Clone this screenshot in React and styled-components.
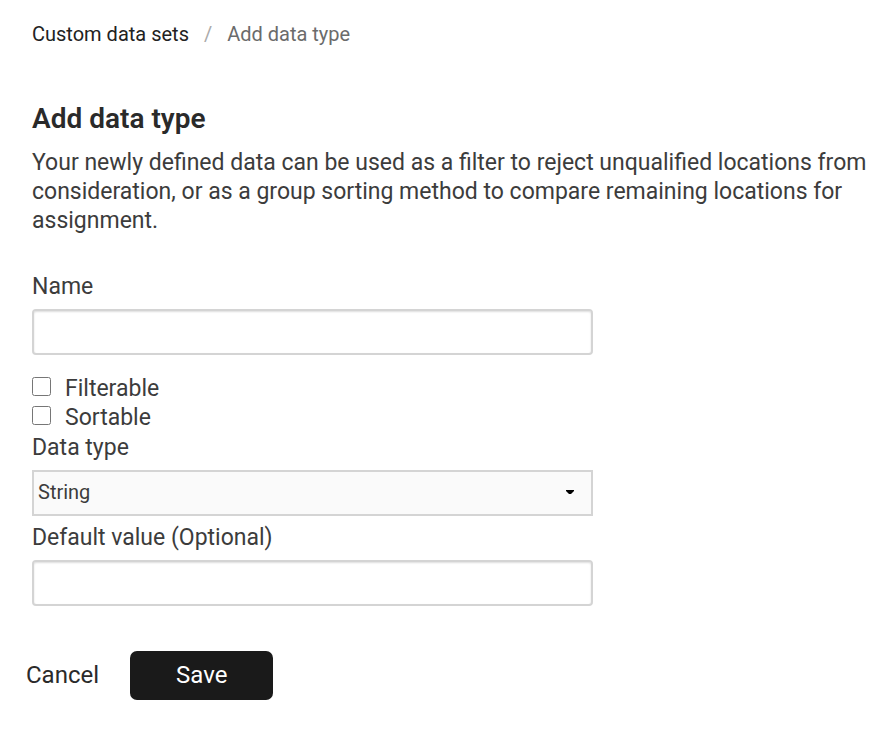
import React, { useState } from "react";
import styled, { createGlobalStyle } from "styled-components";

function App() {
  const [name, setName] = useState("");
  const [filterable, setFilterable] = useState(false);
  const [sortable, setSortable] = useState(false);
  const [type, setType] = useState("string");
  const [defaultValue, setDefaultValue] = useState("");

  return (
    <Page>
      <GlobalStyle />
      <Breadcrumb aria-label="Breadcrumb">
        <BreadcrumbLink href="#data-sets">Custom data sets</BreadcrumbLink>
        <Divider>/</Divider>
        <span>Add data type</span>
      </Breadcrumb>
      <Title>Add data type</Title>
      <Description>
        Your newly defined data can be used as a filter to reject unqualified
        locations from consideration, or as a group sorting method to compare
        remaining locations for assignment.
      </Description>
      <Form onSubmit={(e) => e.preventDefault()}>
        <Label htmlFor="name">Name</Label>
        <TextInput
          id="name"
          value={name}
          onChange={(e) => setName(e.target.value)}
        />
        <CheckList>
          <CheckLabel>
            <Checkbox
              type="checkbox"
              checked={filterable}
              onChange={(e) => setFilterable(e.target.checked)}
            />
            Filterable
          </CheckLabel>
          <CheckLabel>
            <Checkbox
              type="checkbox"
              checked={sortable}
              onChange={(e) => setSortable(e.target.checked)}
            />
            Sortable
          </CheckLabel>
        </CheckList>
        <Label htmlFor="type">Data type</Label>
        <SelectBox>
          <Select
            id="type"
            value={type}
            onChange={(e) => setType(e.target.value)}
          >
            <option value="string">String</option>
            <option value="number">Number</option>
            <option value="boolean">Boolean</option>
          </Select>
          <Arrow viewBox="0 0 8 4" aria-hidden="true">
            <path d="M0 0h8v1L5 4H3L0 1z" fill="#000" />
          </Arrow>
        </SelectBox>
        <Label htmlFor="default">Default value (Optional)</Label>
        <TextInput
          id="default"
          value={defaultValue}
          onChange={(e) => setDefaultValue(e.target.value)}
        />
        <Actions>
          <CancelButton type="button">Cancel</CancelButton>
          <SaveButton type="submit">Save</SaveButton>
        </Actions>
      </Form>
    </Page>
  );
}

export default App;

const GlobalStyle = createGlobalStyle`
  * {
    box-sizing: border-box;
  }
  body {
    margin: 0;
    background: #fff;
    color: #3c3c3c;
    font-family: Roboto, sans-serif;
    font-size: 23px;
    line-height: 29px;
  }
  button, input, select {
    font-family: inherit;
    color: inherit;
  }
`;

const Page = styled.main`
  padding: 20px 8px 28px 32px;
`;

const Breadcrumb = styled.nav`
  display: flex;
  gap: 15px;
  font-size: 20px;
  line-height: 28px;
  color: #6b6b6b;
`;

const BreadcrumbLink = styled.a`
  color: #222;
  text-decoration: none;
`;

const Divider = styled.span`
  color: #aaa;
`;

const Title = styled.h1`
  margin: 53px 0 11px;
  font-size: 28px;
  line-height: 36px;
  font-weight: 600;
  color: #2a2a2a;
`;

const Description = styled.p`
  margin: 0 0 37px;
`;

const Form = styled.form`
  max-width: 561px;
`;

const Label = styled.label`
  display: block;
  margin-bottom: 8px;
`;

const TextInput = styled.input`
  display: block;
  width: 100%;
  height: 46px;
  padding: 0 8px;
  border: 2px solid #d4d4d4;
  border-radius: 4px;
  background: #fff;
  box-shadow: inset 0 1px 2px #ddd;
  font-size: 20px;
`;

const CheckList = styled.div`
  padding: 19px 0 1px;
`;

const CheckLabel = styled.label`
  display: flex;
  align-items: center;
  gap: 14px;
`;

const Checkbox = styled.input`
  width: 19px;
  height: 19px;
  margin: 0 0 4px;
`;

const SelectBox = styled.div`
  position: relative;
  margin-bottom: 7px;
`;

const Select = styled.select`
  display: block;
  width: 100%;
  height: 46px;
  padding: 0 40px 2px 4px;
  appearance: none;
  border: 2px solid #d4d4d4;
  border-radius: 0;
  background: #fafafa;
  font-size: 20px;
`;

const Arrow = styled.svg`
  position: absolute;
  top: 20px;
  right: 19px;
  width: 8px;
  height: 4px;
  pointer-events: none;
`;

const Actions = styled.div`
  display: flex;
  align-items: center;
  gap: 31px;
  margin: 45px 0 0 -6px;
`;

const Button = styled.button`
  border: 0;
  padding: 0;
  font-size: 24px;
  line-height: 49px;
  cursor: pointer;
`;

const CancelButton = styled(Button)`
  background: transparent;
  color: #2a2a2a;
`;

const SaveButton = styled(Button)`
  padding: 0 46px;
  border-radius: 7px;
  background: #1a1a1a;
  color: #fff;
`;
